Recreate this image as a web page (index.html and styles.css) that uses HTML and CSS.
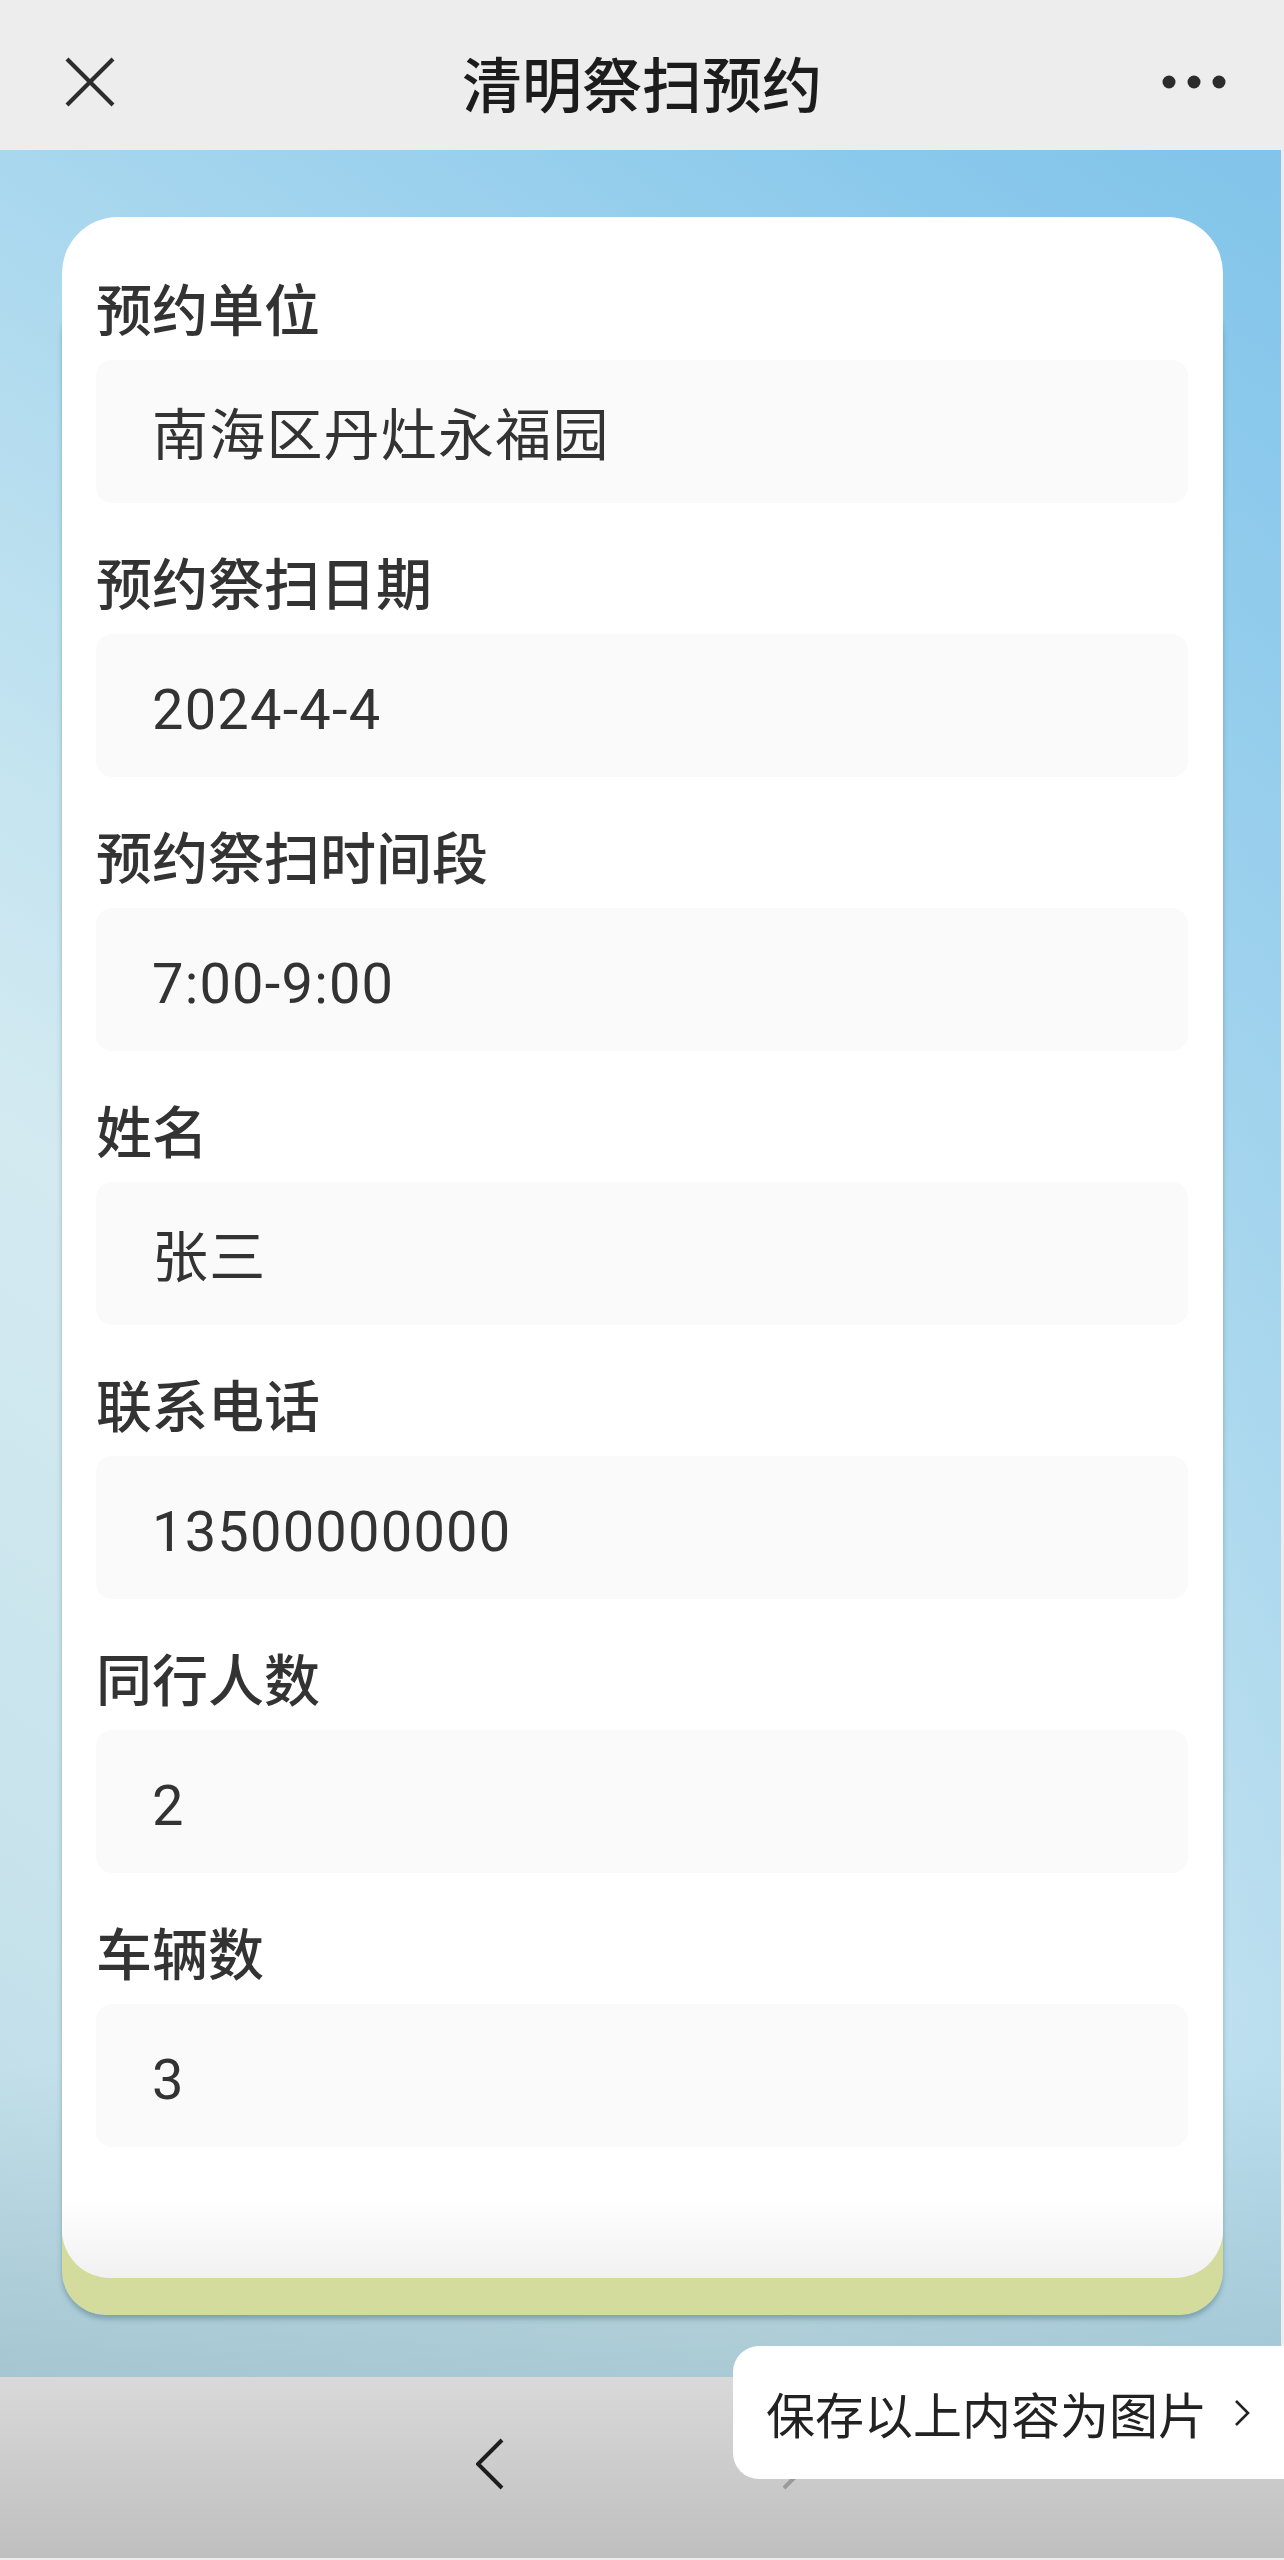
FILE: index.html
```html
<!DOCTYPE html>
<html lang="zh-CN">
<head>
  <meta charset="UTF-8">
  <meta name="viewport" content="width=device-width, initial-scale=1.0">
  <title>清明祭扫预约</title>
  <link rel="stylesheet" href="styles.css">
</head>
<body>

  <!-- 顶部标题栏 -->
  <div class="topbar">
    <span class="topbar-left">
      <svg class="icon-close" width="52" height="52" viewBox="0 0 52 52">
        <path d="M3 3 L49 49 M49 3 L3 49" stroke="#2c2c2c" stroke-width="4.2" fill="none"/>
      </svg>
    </span>
    <h1 class="title">清明祭扫预约</h1>
    <span class="topbar-right">
      <svg class="icon-more" width="64" height="14" viewBox="0 0 64 14">
        <circle cx="7" cy="7" r="6.5" fill="#2c2c2c"/>
        <circle cx="32" cy="7" r="6.5" fill="#2c2c2c"/>
        <circle cx="57" cy="7" r="6.5" fill="#2c2c2c"/>
      </svg>
    </span>
  </div>

  <div class="page">
    <div class="sheet">
      <div class="card">
        <div class="field">
          <div class="label">预约单位</div>
          <div class="value">南海区丹灶永福园</div>
        </div>
        <div class="field">
          <div class="label">预约祭扫日期</div>
          <div class="value">2024-4-4</div>
        </div>
        <div class="field">
          <div class="label">预约祭扫时间段</div>
          <div class="value">7:00-9:00</div>
        </div>
        <div class="field">
          <div class="label">姓名</div>
          <div class="value">张三</div>
        </div>
        <div class="field">
          <div class="label">联系电话</div>
          <div class="value">13500000000</div>
        </div>
        <div class="field">
          <div class="label">同行人数</div>
          <div class="value">2</div>
        </div>
        <div class="field">
          <div class="label">车辆数</div>
          <div class="value">3</div>
        </div>
      </div>
    </div>
  </div>

  <!-- 底部导航 -->
  <div class="navbar">
    <svg class="nav-back" width="30" height="52" viewBox="0 0 30 52">
      <path d="M26 2 L2 26 L26 50" stroke="#1e1e1e" stroke-width="4" fill="none"/>
    </svg>
    <svg class="nav-forward" width="30" height="52" viewBox="0 0 30 52">
      <path d="M4 2 L28 26 L4 50" stroke="#9a9a9a" stroke-width="4" fill="none"/>
    </svg>

    <div class="save-tip">
      <span>保存以上内容为图片</span>
      <svg width="16" height="28" viewBox="0 0 16 28">
        <path d="M2 2 L14 14 L2 26" stroke="#222" stroke-width="2.6" fill="none"/>
      </svg>
    </div>
  </div>

</body>
</html>
```

FILE: styles.css
```css
body {
  font-family: "Noto Sans CJK SC", "Noto Sans", sans-serif;
  background-color: #ededed;
  margin: 0;
  padding: 0;
  width: 1284px;
}

.topbar {
  display: grid;
  grid-template-columns: 1fr auto 1fr;
  align-items: center;
  height: 150px;
  padding-top: 14px;
  box-sizing: border-box;
  background-color: #ededed;
}

.topbar-left {
  padding-left: 64px;
  display: flex;
}

.topbar-right {
  justify-self: end;
  padding-right: 58px;
  display: flex;
}

.title {
  margin: 0;
  font-size: 60px;
  font-weight: 500;
  color: #1c1c1c;
  line-height: 1;
}

.page {
  width: 1281px;
  padding: 67px 58px 99px 62px;
  box-sizing: border-box;
  background:
    linear-gradient(to bottom, rgba(150, 185, 196, 0) 86%, rgba(150, 185, 196, 0.6) 100%),
    linear-gradient(to left, rgba(140, 200, 235, 0.35) 0%, rgba(140, 200, 235, 0) 40%),
    linear-gradient(215deg, #7cc2ea 0%, #a6d6ee 27%, #c4e4f0 48%, #d4eaf1 60%, #c9e4ed 80%, #bddbe6 100%);
}

.sheet {
  position: relative;
}

/* 卡片下面的底纸 */
.sheet::before {
  content: "";
  position: absolute;
  top: 72px;
  left: 0;
  right: 0;
  bottom: -37px;
  border-radius: 44px;
  background: linear-gradient(to bottom, #b9d6e2 0%, #c6dbe2 90%, #d3db9d 96%, #d3db9d 100%);
  box-shadow: 0 4px 5px rgba(70, 110, 120, 0.45);
}

.card {
  position: relative;
  display: flex;
  flex-direction: column;
  gap: 41px;
  padding: 53px 35px 131px 34px;
  border-radius: 56px 56px 48px 48px;
  background: linear-gradient(to bottom, #fff calc(100% - 80px), #f1f1f1 100%);
}

.field {
  display: flex;
  flex-direction: column;
  gap: 16px;
}

.label {
  font-size: 56px;
  font-weight: 500;
  line-height: 74px;
  color: #333;
}

.value {
  display: flex;
  align-items: center;
  height: 143px;
  padding: 9px 0 0 56px;
  box-sizing: border-box;
  border-radius: 16px;
  background-color: #fafafa;
  font-family: Roboto, "Noto Sans CJK SC", sans-serif;
  font-size: 56px;
  line-height: 1;
  color: #333;
  letter-spacing: 1.2px;
}

.navbar {
  position: relative;
  height: 181px;
  padding: 61px 0 0 476px;
  box-sizing: border-box;
  display: flex;
  align-items: flex-start;
  gap: 274px;
  background: linear-gradient(to bottom, #d9d9d9, #bfbfbf);
}

/* 悬浮的保存提示 */
.save-tip {
  position: absolute;
  right: 0;
  bottom: 79px;
  width: 551px;
  height: 133px;
  padding-left: 33px;
  box-sizing: border-box;
  display: flex;
  align-items: center;
  gap: 27px;
  background-color: #fff;
  border-radius: 26px 0 0 26px;
  font-size: 49px;
  color: #222;
}
```
